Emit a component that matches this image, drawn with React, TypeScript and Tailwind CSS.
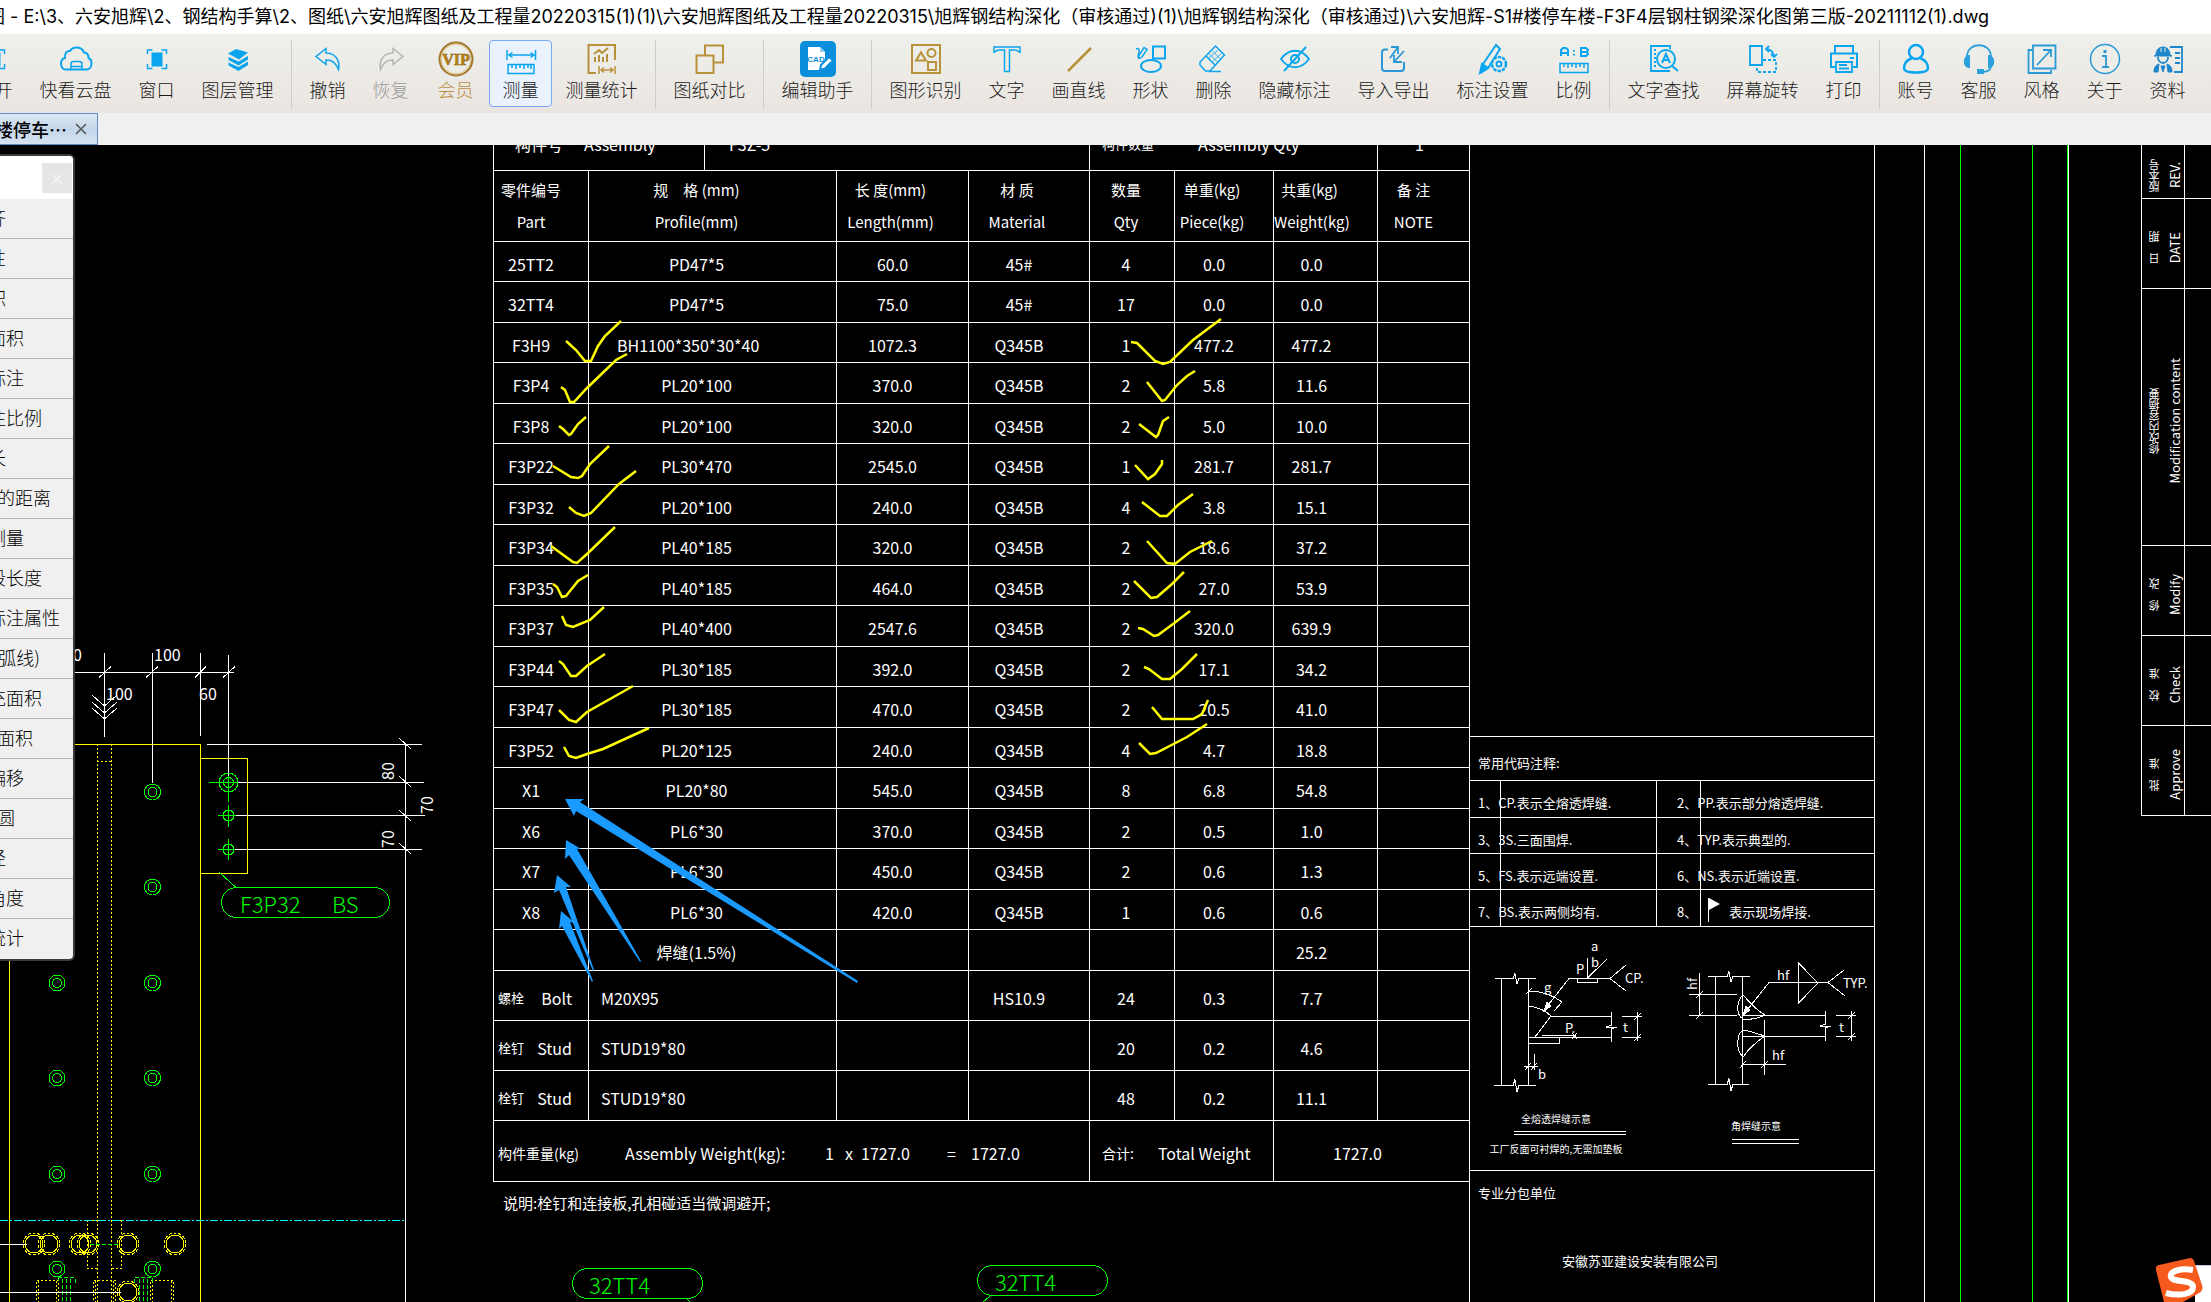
import React from 'react';
import clsx from 'clsx';

const BLUE = '#0aa5ee';
const GOLD = '#b8923a';

function Icon({ children, stroke = BLUE }: { children: React.ReactNode; stroke?: string }) {
  return (
    <svg className="h-9 w-9 shrink-0" viewBox="0 0 36 36" fill="none" stroke={stroke} strokeWidth={2} aria-hidden="true">
      {children}
    </svg>
  );
}

const icons: Record<string, React.ReactNode> = {
  cloud: (
    <Icon>
      <path d="M8 28.5C4.500 28.500 3 25.500 3 22.500c0-3 2-5 4-5.500C6.500 12 9 9.500 12 10c1.500-2.500 4-3.500 6.500-3.500 4 0 6.500 2 7.500 5 3.500 0 4.500 3 4.500 5.500 2 .8 3 3 3 5.500 0 3.500-2 6-5 6z" />
      <path d="M13 28v-5c0-1.500 1-2.500 2.500-2.500h6c1.500 0 2.500 1 2.500 2.500v5M13 25.500h11" strokeWidth={1.500} />
    </Icon>
  ),
  window: (
    <Icon>
      <rect x="13.500" y="12.500" width="9" height="12" fill={BLUE} />
      <path d="M8.500 13V9h5M22.500 9h5v4M27.500 23v4.500h-5M13.500 27.500h-5V23" strokeWidth={1.500} />
    </Icon>
  ),
  layers: (
    <Icon>
      <g fill={BLUE} stroke="none">
        <path d="M8 12.500l8-4.500 12 3.500-9 7z" />
        <path d="M8.500 16l10 4.500L28 15v3.500L18.500 24.500 8.500 19z" />
        <path d="M8.500 21.500l10 4.500L28 20.500V24l-9.500 6-10-5.500z" />
      </g>
    </Icon>
  ),
  undo: (
    <Icon>
      <path d="M16 7.500L6 15.500l10 8v-4.500c7 0 9.500 3 12.500 9.500 2-10-4-16.500-12.500-16.500z" strokeWidth={1.500} />
    </Icon>
  ),
  redo: (
    <Icon stroke="#b4b4b4">
      <path d="M20 7.500l10 8-10 8v-4.500c-7 0-9.500 3-12.500 9.500-2-10 4-16.500 12.500-16.500z" strokeWidth={1.500} />
    </Icon>
  ),
  vip: (
    <Icon stroke="#a1762b">
      <circle cx="18" cy="18" r="16.500" />
      <circle cx="18" cy="18" r="15" stroke="#d8b96c" strokeWidth={1} />
      <text x="18" y="24" textAnchor="middle" fill="#b8870f" stroke="#8d6113" strokeWidth={0.500} className="font-['Liberation_Serif',serif] text-base font-bold">
        VIP
      </text>
    </Icon>
  ),
  measure: (
    <Icon>
      <path d="M4 9v10M32.500 9v10M6 14h25M9.500 11.500L6 14l3.500 2.500M27.500 11.500L31 14l-3.500 2.500" strokeWidth={1.500} />
      <path d="M5 23.500h26v9H5zM9 24v3M13 24v4M17 24v3M21 24v4M25 24v3M28 24v4" strokeWidth={1.500} />
    </Icon>
  ),
  stats: (
    <Icon stroke={GOLD}>
      <path d="M12 32H4.500V4H31v15" />
      <path d="M10 13l5-4 3 3 6-5M11 16v5M15 14v7M19 16v5M23 13v8" />
      <path d="M15 25v8M31 25v8M17 29h12M20 26.500L17 29l3 2.500M26 26.500l3 2.500-3 2.500" strokeWidth={1.500} />
    </Icon>
  ),
  compare: (
    <Icon stroke={GOLD}>
      <path d="M4.500 14.500h17V32h-17zM13 14V4.500h18v17h-9" />
    </Icon>
  ),
  cad: (
    <Icon stroke="none">
      <rect width="36" height="36" rx="5" fill="#0b8fdc" />
      <path d="M8 6h12l5 5v18H8z" fill="#fff" />
      <path d="M20 6v5h5z" fill="#8fd0f5" />
      <text x="16" y="21" textAnchor="middle" fill="#0b8fdc" className="font-['Liberation_Sans',sans-serif] text-[8px] font-bold">
        CAD
      </text>
      <path d="M20 29l1-5 8-8 4 3.500-8 8z" fill="#fff" stroke="#0b8fdc" />
    </Icon>
  ),
  recognise: (
    <Icon stroke={GOLD}>
      <path d="M4 4h28v28H4z" />
      <circle cx="23.500" cy="12" r="4" />
      <path d="M8 19.500l5-8 5 8zM20 21h8v8h-8z" />
    </Icon>
  ),
  text: (
    <Icon>
      <path d="M5 6h26v6c-1-2-3-3-6-3h-4.500v21.500h-5V9H11c-3 0-5 1-6 3z" strokeWidth={1.500} />
    </Icon>
  ),
  line: (
    <Icon stroke={GOLD}>
      <path d="M7 30L30 7" strokeWidth={2.500} />
    </Icon>
  ),
  shapes: (
    <Icon>
      <path d="M20 5.500h12v12H20z" />
      <ellipse cx="18" cy="25" rx="10" ry="6" />
      <path d="M3 8c3-1.500 4 1 2.500 5s1 5 3.500 3L14 8.500l-3-2-5 8-.5 3.500" strokeWidth={1.500} />
    </Icon>
  ),
  erase: (
    <Icon>
      <path d="M19.500 5l9 9-14.500 16H9.500L4 24v-3zM10 15l9.500 9.500M13 30.500h12" strokeWidth={1.500} />
      <path d="M13 12.500l9 9M16 9.500l9 9M13 17l9-8M16.500 20.500l9-8" strokeWidth={0.800} />
    </Icon>
  ),
  hide: (
    <Icon>
      <path d="M4 18c8-11 20-11 28 0-8 11-20 11-28 0z" strokeWidth={1.800} />
      <circle cx="18" cy="18" r="4" />
      <path d="M7 30L29 6" />
    </Icon>
  ),
  exchange: (
    <Icon stroke="#2a98d4">
      <path d="M12 8.500H9c-2 0-3 1-3 3V27c0 2 1 3 3 3h16c2 0 3-1 3-3v-6" />
      <path d="M15 6h7v7M22 6l-8 11M28 10L18 21M18 14v7h8" strokeWidth={1.800} />
    </Icon>
  ),
  settings: (
    <Icon>
      <path d="M21 4l4 4-12 19-6 4 1-8z" />
      <path d="M5 32l2-9 6 4z" fill={BLUE} />
      <circle cx="24" cy="23" r="7" fill="#edebe8" strokeDasharray="3.500 1" strokeWidth={2.500} />
      <circle cx="24" cy="23" r="2.500" />
    </Icon>
  ),
  scale: (
    <Icon>
      <path d="M5 15V9l2-2h3l2 2v6M5 12h7M25 7h5l2 2-1 2 1 2-2 2h-5zM25 11h6M18 9v1.500M18 13v1.500" />
      <path d="M4 22.500h28v9H4zM8 23v3M12 23v4M16 23v3M20 23v4M24 23v3M28 23v4" strokeWidth={1.500} />
    </Icon>
  ),
  find: (
    <Icon>
      <path d="M24 8V5H5v25h19M8 9h2M8 13h2M8 17h2M8 21h2M8 25h2" strokeWidth={1.800} />
      <circle cx="20" cy="18" r="9" />
      <path d="M26 25l6 5M16 22l4-9 4 9M18 19h4" />
    </Icon>
  ),
  rotate: (
    <Icon>
      <path d="M5 5h12v19H5z" strokeWidth={1.800} />
      <path d="M18 19h13v12H12v-6" strokeDasharray="3 2" strokeWidth={1.800} />
      <path d="M21 8c4 0 7 3 8 7M24 5l-3 3 3 3M26 13l3 3 3-3" strokeWidth={1.800} />
    </Icon>
  ),
  print: (
    <Icon>
      <path d="M9 12V5h18v7M9 26H5V12.500h26V26h-4" />
      <path d="M10 21h16v10H10zM13 24h8M13 27.500h10M24 17h4" strokeWidth={1.800} />
    </Icon>
  ),
  account: (
    <Icon>
      <circle cx="18" cy="11" r="7" strokeWidth={2.500} />
      <path d="M14 17c-5 2-8 6-8 10 0 3 3 4.500 12 4.500S30 30 30 27c0-4-3-8-8-10" strokeWidth={2.500} />
    </Icon>
  ),
  service: (
    <Icon stroke="#2ba0dc">
      <path d="M6 17C5 0 31 0 30 17M30 26c-1 4-5 5-9 5" strokeWidth={1.800} />
      <path d="M8 15c-5 0-6 10 0 11zM28 15c5 0 6 10 0 11zM17 29h5v3h-5z" fill="#2ba0dc" />
    </Icon>
  ),
  style: (
    <Icon stroke="#2a9ad6">
      <path d="M9 4.500h22.500v23H9zM8 9H4.500v23H27v-3M13 24L27 9M19 9h8v7" strokeWidth={1.800} />
    </Icon>
  ),
  about: (
    <Icon stroke="#2a9ad6">
      <circle cx="18" cy="18" r="14.500" strokeWidth={1.500} />
      <path d="M15 15h4v11M15 26h7" strokeWidth={1.800} />
      <path d="M18 9v3" strokeWidth={3} />
    </Icon>
  ),
  docs: (
    <Icon stroke="#1d86cc">
      <path d="M20 6h12v25H24M25 12h5M25 17h5M25 22h5" strokeWidth={1.800} />
      <path d="M6 14c0-5 3-8 7-8s7 3 7 8l2 1H4z" fill="#1d86cc" strokeWidth={1} />
      <path d="M11 7v4M15 7v4" stroke="#edebe8" strokeWidth={1} />
      <path d="M8 16c0 8 10 8 10 0" strokeWidth={1.800} />
      <path d="M4 31c0-5 2-7 5-8l-1 8zM22 31c0-5-2-7-5-8l1 8zM13 31l-2-6h4z" fill="#1d86cc" strokeWidth={1} />
    </Icon>
  ),
};

type Tool = { label: string; icon: string; size: string; look?: 'gold' | 'muted' | 'active' };

const toolGroups: Tool[][] = [
  [
    { label: '打开', icon: 'window', size: 'w-[63px]' },
    { label: '快看云盘', icon: 'cloud', size: 'w-[99px]' },
    { label: '窗口', icon: 'window', size: 'w-[63px]' },
    { label: '图层管理', icon: 'layers', size: 'w-[99px]' },
  ],
  [
    { label: '撤销', icon: 'undo', size: 'w-[63px]' },
    { label: '恢复', icon: 'redo', size: 'w-[63px]', look: 'muted' },
    { label: '会员', icon: 'vip', size: 'w-[67px]', look: 'gold' },
    { label: '测量', icon: 'measure', size: 'w-[63px]', look: 'active' },
    { label: '测量统计', icon: 'stats', size: 'w-[99px]' },
  ],
  [{ label: '图纸对比', icon: 'compare', size: 'w-[99px]' }],
  [{ label: '编辑助手', icon: 'cad', size: 'w-[99px]' }],
  [
    { label: '图形识别', icon: 'recognise', size: 'w-[99px]' },
    { label: '文字', icon: 'text', size: 'w-[63px]' },
    { label: '画直线', icon: 'line', size: 'w-[81px]' },
    { label: '形状', icon: 'shapes', size: 'w-[63px]' },
    { label: '删除', icon: 'erase', size: 'w-[63px]' },
    { label: '隐藏标注', icon: 'hide', size: 'w-[99px]' },
    { label: '导入导出', icon: 'exchange', size: 'w-[99px]' },
    { label: '标注设置', icon: 'settings', size: 'w-[99px]' },
    { label: '比例', icon: 'scale', size: 'w-[63px]' },
  ],
  [
    { label: '文字查找', icon: 'find', size: 'w-[99px]' },
    { label: '屏幕旋转', icon: 'rotate', size: 'w-[99px]' },
    { label: '打印', icon: 'print', size: 'w-[63px]' },
  ],
  [
    { label: '账号', icon: 'account', size: 'w-[63px]' },
    { label: '客服', icon: 'service', size: 'w-[63px]' },
    { label: '风格', icon: 'style', size: 'w-[63px]' },
    { label: '关于', icon: 'about', size: 'w-[63px]' },
    { label: '资料', icon: 'docs', size: 'w-[63px]' },
  ],
];

// The palette hangs off the left edge of the window, so labels are cut there.
const measureItems = [
  { label: '对齐', end: 'w-[6px]' },
  { label: '线性', end: 'w-[6px]' },
  { label: '面积', end: 'w-[6px]' },
  { label: '矩形面积', end: 'w-[24px]' },
  { label: '坐标标注', end: 'w-[24px]' },
  { label: '标注比例', end: 'w-[42px]' },
  { label: '弧长', end: 'w-[6px]' },
  { label: '点到线的距离', end: 'w-[51px]' },
  { label: '连续测量', end: 'w-[24px]' },
  { label: '分段长度', end: 'w-[42px]' },
  { label: '修改标注属性', end: 'w-[60px]' },
  { label: '面积(弧线)', end: 'w-[40px]' },
  { label: '填充面积', end: 'w-[42px]' },
  { label: '侧面积', end: 'w-[33px]' },
  { label: '测量偏移', end: 'w-[24px]' },
  { label: '画圆', end: 'w-[15px]' },
  { label: '半径', end: 'w-[6px]' },
  { label: '测量角度', end: 'w-[24px]' },
  { label: '测量统计', end: 'w-[24px]' },
];

const parts = [
  ['25TT2', 'PD47*5', '60.0', '45#', '4', '0.0', '0.0'],
  ['32TT4', 'PD47*5', '75.0', '45#', '17', '0.0', '0.0'],
  ['F3H9', 'BH1100*350*30*40', '1072.3', 'Q345B', '1', '477.2', '477.2'],
  ['F3P4', 'PL20*100', '370.0', 'Q345B', '2', '5.8', '11.6'],
  ['F3P8', 'PL20*100', '320.0', 'Q345B', '2', '5.0', '10.0'],
  ['F3P22', 'PL30*470', '2545.0', 'Q345B', '1', '281.7', '281.7'],
  ['F3P32', 'PL20*100', '240.0', 'Q345B', '4', '3.8', '15.1'],
  ['F3P34', 'PL40*185', '320.0', 'Q345B', '2', '18.6', '37.2'],
  ['F3P35', 'PL40*185', '464.0', 'Q345B', '2', '27.0', '53.9'],
  ['F3P37', 'PL40*400', '2547.6', 'Q345B', '2', '320.0', '639.9'],
  ['F3P44', 'PL30*185', '392.0', 'Q345B', '2', '17.1', '34.2'],
  ['F3P47', 'PL30*185', '470.0', 'Q345B', '2', '20.5', '41.0'],
  ['F3P52', 'PL20*125', '240.0', 'Q345B', '4', '4.7', '18.8'],
  ['X1', 'PL20*80', '545.0', 'Q345B', '8', '6.8', '54.8'],
  ['X6', 'PL6*30', '370.0', 'Q345B', '2', '0.5', '1.0'],
  ['X7', 'PL6*30', '450.0', 'Q345B', '2', '0.6', '1.3'],
  ['X8', 'PL6*30', '420.0', 'Q345B', '1', '0.6', '0.6'],
  ['', '焊缝(1.5%)', '', '', '', '', '25.2'],
];

const fasteners = [
  ['螺栓', 'Bolt', 'M20X95', '', 'HS10.9', '24', '0.3', '7.7'],
  ['栓钉', 'Stud', 'STUD19*80', '', '', '20', '0.2', '4.6'],
  ['栓钉', 'Stud', 'STUD19*80', '', '', '48', '0.2', '11.1'],
];

const partHeads = [
  ['零件编号', 'Part'],
  ['规　格 (mm)', 'Profile(mm)'],
  ['长 度(mm)', 'Length(mm)'],
  ['材 质', 'Material'],
  ['数量', 'Qty'],
  ['单重(kg)', 'Piece(kg)'],
  ['共重(kg)', 'Weight(kg)'],
  ['备 注', 'NOTE'],
];

// right padding per column: the drawing's texts sit left of the cell centre
const colPad = ['pr-5', 'pr-8', 'pr-5', 'pr-5', 'pr-3', 'pr-5', 'pr-7', 'pr-4'];
const headPad = ['pr-5', 'pr-8', 'pr-6', 'pr-6', 'pr-3', 'pr-6', 'pr-8', 'pr-5'];

function PartsTable() {
  return (
    <table className="absolute left-[493px] -top-4 w-[977px] table-fixed border-collapse text-center text-base leading-5 text-white [&_td]:border [&_td]:border-white [&_th]:border [&_th]:border-white [&_th]:font-normal">
      <colgroup>
        <col className="w-[95px]" />
        <col className="w-[248px]" />
        <col className="w-[132px]" />
        <col className="w-[121px]" />
        <col className="w-[85px]" />
        <col className="w-[99px]" />
        <col className="w-[104px]" />
        <col className="w-[92px]" />
      </colgroup>
      <thead>
        <tr className="h-10">
          <td colSpan={4} className="p-0">
            <div className="flex h-10">
              <div className="flex w-[211px] border-r border-white pt-1">
                <span className="w-[90px]">构件号</span>
                <span>Assembly</span>
              </div>
              <span className="pt-1 pl-6">F3Z-5</span>
            </div>
          </td>
          <td colSpan={3} className="p-0 align-top">
            <div className="flex gap-11 pt-1 pl-3">
              <span className="text-[13px]">构件数量</span>
              <span>Assembly Qty</span>
            </div>
          </td>
          <td className="p-0 pt-1 pr-2 align-top">1</td>
        </tr>
        <tr className="h-[71px]">
          {partHeads.map(([zh, en], i) => (
            <th key={en} scope="col" className={clsx('p-0', headPad[i])}>
              <div className="flex flex-col gap-3 whitespace-nowrap">
                <span className="text-[15px] leading-5">{zh}</span>
                <span className="text-[15px] leading-5">{en}</span>
              </div>
            </th>
          ))}
        </tr>
      </thead>
      <tbody>
        {parts.map((row, r) => (
          <tr key={r} className={r % 2 ? 'h-[41px]' : 'h-[40px]'}>
            {row.map((value, c) => (
              <td key={c} className={clsx('p-0 pt-1', value.length > 12 ? 'pl-7 text-left' : colPad[c])}>
                {value}
              </td>
            ))}
            <td />
          </tr>
        ))}
        {fasteners.map(([zh, en, ...rest], r) => (
          <tr key={r} className="h-[50px]">
            <td className="p-0 pt-1">
              <div className="flex justify-between pr-4 pl-1">
                <span className="text-[13px] leading-5">{zh}</span>
                <span>{en}</span>
              </div>
            </td>
            {rest.map((value, c) => (
              <td key={c} className={clsx('p-0 pt-1', c === 0 ? 'pl-3 text-left' : colPad[c + 1])}>
                {value}
              </td>
            ))}
            <td />
          </tr>
        ))}
        <tr className="h-[61px]">
          <td colSpan={4} className="p-0 pt-1">
            <div className="flex pl-1">
              <span className="w-[127px] text-left text-sm leading-5">构件重量(kg)</span>
              <span className="w-[200px] text-left">Assembly Weight(kg):</span>
              <span className="w-5 text-left">1</span>
              <span className="w-4 text-left">x</span>
              <span className="w-[86px] text-left">1727.0</span>
              <span className="w-6 text-left">=</span>
              <span>1727.0</span>
            </div>
          </td>
          <td colSpan={2} className="p-0 pt-1">
            <div className="flex gap-6 pl-3">
              <span className="text-sm leading-5">合计:</span>
              <span>Total Weight</span>
            </div>
          </td>
          <td colSpan={2} className="p-0 pt-1 pr-7">
            1727.0
          </td>
        </tr>
      </tbody>
    </table>
  );
}

function CodeNotes() {
  return (
    <section className="absolute top-[591px] left-[1469px] w-[406px] border border-b-0 border-white text-[13px] leading-5 text-white">
      <h2 className="h-[44px] border-b border-white pt-4 pl-2">常用代码注释:</h2>
      <div className="grid grid-cols-[187px_1fr]">
        <p className="h-[37px] border-r border-b border-white pt-3 pl-2">1、CP.表示全熔透焊缝.</p>
        <p className="h-[37px] border-b border-white pt-3 pl-5">2、PP.表示部分熔透焊缝.</p>
        <p className="h-9 border-r border-b border-white pt-3 pl-2">3、3S.三面围焊.</p>
        <p className="h-9 border-b border-white pt-3 pl-5">4、TYP.表示典型的.</p>
        <p className="h-9 border-r border-b border-white pt-3 pl-2">5、FS.表示远端设置.</p>
        <p className="h-9 border-b border-white pt-3 pl-5">6、NS.表示近端设置.</p>
        <p className="h-[37px] border-r border-b border-white pt-3 pl-2">7、BS.表示两侧均有.</p>
        <p className="flex h-[37px] gap-2 border-b border-white pt-3 pl-5">
          8、
          <svg className="-mt-1 h-6 w-4" viewBox="0 0 16 24" fill="#fff" aria-hidden="true">
            <path d="M3 0h1l11 6-11 6v12H3z" />
          </svg>
          <span>表示现场焊接.</span>
        </p>
      </div>
      <div className="h-[244px] border-b border-white" />
      <p className="pt-3 pl-2">专业分包单位</p>
      <p className="pt-12 pr-16 text-center">安徽苏亚建设安装有限公司</p>
    </section>
  );
}

const revisions = [
  { zh: '版本号', en: 'REV.', h: 'h-[54px]' },
  { zh: '日　期', en: 'DATE', h: 'h-[90px]' },
  { zh: '修改内容摘要', en: 'Modification content', h: 'h-[257px]' },
  { zh: '修　改', en: 'Modify', h: 'h-[90px]' },
  { zh: '校　准', en: 'Check', h: 'h-[90px]' },
  { zh: '批　准', en: 'Approve', h: 'h-[90px]' },
];

function RevisionStrip() {
  return (
    <div className="absolute top-0 right-0 flex w-[70px] flex-col border-l border-white text-white">
      {revisions.map((rev) => (
        <div key={rev.en} className={clsx('flex border-b border-white', rev.h)}>
          <div className="flex w-[43px] items-center justify-between border-r border-white pt-3 pb-1 pr-px pl-1">
            <span className="rotate-180 text-[11px] leading-4 whitespace-nowrap [writing-mode:vertical-rl]">{rev.zh}</span>
            <span className="rotate-180 text-[13px] leading-4 whitespace-nowrap [writing-mode:vertical-rl]">{rev.en}</span>
          </div>
        </div>
      ))}
    </div>
  );
}

const ticks = [
  '566,341 576,350 585,361 591,361 598,346 605,336 621,321',
  '561,387 565,390 570,402 574,402 587,388 616,360 627,354',
  '559,426 563,429 569,435 571,434 578,424 586,417',
  '553,466 571,477 578,478 582,476 590,464 609,446',
  '569,507 576,513 584,516 591,513 619,484 636,471',
  '551,546 573,562 577,563 587,554 615,527',
  '553,584 557,587 562,597 566,596 578,581 588,575',
  '562,616 566,625 573,627 590,620 604,607',
  '559,661 563,664 571,676 576,676 587,666 605,654',
  '559,710 569,720 576,722 587,712 626,690 633,686',
  '564,747 569,756 576,758 587,754 603,749 649,728',
  '1131,342 1137,343 1155,361 1163,364 1170,362 1193,340 1221,319',
  '1147,382 1162,401 1165,400 1177,385 1187,376 1195,371',
  '1139,424 1156,437 1158,435 1163,421 1169,417',
  '1135,465 1148,479 1155,474 1162,464 1162,460',
  '1142,502 1160,516 1167,516 1178,505 1193,494',
  '1147,541 1167,563 1175,564 1190,552 1212,541',
  '1134,581 1151,598 1157,597 1172,584 1184,572',
  '1138,628 1143,629 1154,636 1158,635 1173,624 1190,611',
  '1144,667 1149,669 1162,679 1170,679 1182,669 1197,654',
  '1152,707 1162,719 1193,719 1202,714 1208,700',
  '1139,743 1150,754 1156,753 1187,737 1207,724',
];

const arrows = [
  '565,799 584,799 580,802 858,981 857,983 576,811 574,816',
  '566,840 581,849 577,849 641,961 640,962 569,855 565,859',
  '557,875 571,887 566,887 594,970 593,971 559,890 554,893',
  '561,911 575,923 570,922 593,981 592,982 562,926 559,929',
];

const bolts = [
  [152.5, 792], [152.5, 887], [152.5, 983], [152.5, 1078], [152.5, 1174], [152.5, 1269],
  [57, 983], [57, 1078], [57, 1174], [57, 1269],
];

const shearStuds = [
  [34, 1244], [49, 1244], [80, 1244], [88, 1244], [128, 1244], [175, 1244], [128, 1292],
];

function Markup() {
  return (
    <svg className="pointer-events-none absolute inset-0 h-full w-full" fill="none" aria-hidden="true">
      <g transform="translate(0 -145)">
        <g stroke="#ff0" strokeWidth={2.5}>
          {ticks.map((points) => (
            <polyline key={points} points={points} />
          ))}
        </g>
        <g fill="#1a9aff">
          {arrows.map((points) => (
            <polygon key={points} points={points} />
          ))}
        </g>
      </g>
    </svg>
  );
}

function ColumnDrawing() {
  return (
    <g>
      {/* column and plate outlines */}
      <g stroke="#ff0">
        <path d="M0 744.500H200.500V1400M9.500 744V1400M200.500 758.500H247.500V873.500H200.500" />
        <path d="M97.500 744V1400M111.500 744V1400M97 761.500H112M87.500 1220.500H97M87.500 1220V1268.500H97M121.500 1220.500H111M121.500 1220V1268.500H111M36.500 1400V1280.500H58.500V1400M38.500 1281V1400M56.500 1281V1400M93.500 1400V1280.500H115.500V1400M95.500 1281V1400M113.500 1281V1400M150.500 1400V1280.500H173.500V1400M152.500 1281V1400M171.500 1281V1400" strokeDasharray="2 2" />
        {shearStuds.map(([x, y]) => (
          <g key={`${x}-${y}`}>
            <circle cx={x} cy={y} r={11} strokeDasharray="3 2" />
            <circle cx={x} cy={y} r={9} />
          </g>
        ))}
      </g>
      <path d="M0 1220.500H405" stroke="#0ff" strokeDasharray="8 2 2 2" />
      <g stroke="#0f0">
        {bolts.map(([x, y]) => (
          <g key={`${x}-${y}`}>
            <circle cx={x} cy={y} r={8} />
            <circle cx={x} cy={y} r={4.5} />
          </g>
        ))}
        <circle cx={228.5} cy={782.5} r={9.5} />
        <circle cx={228.5} cy={782.5} r={5} />
        <circle cx={228.5} cy={815.5} r={5.5} />
        <circle cx={228.5} cy={849.5} r={5.5} />
        <path d="M209 782.500H238M228.500 775V802M218 815.500H237M228.500 805V827M218 849.500H237M228.500 839V860" />
        <path d="M219 872L236 887.500" />
        <rect x="221.500" y="887.500" width="168" height="30" rx="15" />
        <path d="M90 1244.500H118M58 1277.500H75V1283M58 1277V1283M62.500 1279V1400M66.500 1279V1400M70.500 1279V1400M134 1283V1277.500H152V1283M139.500 1279V1400M143.500 1279V1400M147.500 1279V1400" strokeDasharray="4 2" />
      </g>
      <g stroke="#fff">
        <path d="M0 672.500H234M104.500 653V737M152.500 653V783M200.500 653V736M228.500 655V776" />
        <path d="M99 677.500l12-11M146 677.500l12-11M195 677.500l11-11M223 677.500l12-11" />
        <path d="M92 695l12.500 11 12.500-11M92 702l12.500 11 12.500-11M92 708l12.500 11 12.500-11" />
        <path d="M207 744.500H422M238 782.500H424M236 815.500H425M235 849.500H422M405.500 744V1400" />
        <path d="M399 738l12 11M399 776l12 11M399 810l12 11M399 843l12 11" />
        <path d="M0 1244.500H27M0 1292.500H121" />
      </g>
    </g>
  );
}

function WeldDetails() {
  return (
    <g stroke="#fff">
      {/* full penetration weld */}
      <path d="M1495 978.500H1513l2-5 2 10 2-5H1536M1494 1085.500H1513l2-6 2 12 2-6H1536M1501.500 978V1085M1528.500 978V1085" />
      <path d="M1528 991c14 0 26 5 34 11M1526 994l6-6M1554 1011l8-9M1528 1006c10 1 18 5 23 10L1535 1037" />
      <path d="M1551 1016.500H1611.500M1528 1037.500H1611.500M1611.500 1012V1025l-5 2h10l-5 2V1042M1528 1043.500H1559.500V1037M1542 1035.500H1576M1572 1033l5 6M1577 1033l-5 6" />
      <path d="M1622 1016.500H1642M1622 1037.500H1641M1637.500 1012V1041M1634 1020l7-7M1634 1041l7-7" />
      <path d="M1545 1009L1569 978.500H1610M1587.500 958V978L1607 959M1577.500 978V982.500H1597.500V978M1626 965L1610 978.500 1626 991" />
      <path d="M1544 1011l3-9 4 4z" fill="#fff" />
      <path d="M1524 1066.500H1538M1534.500 1054V1070M1525 1070l6-7M1531 1070l6-7" />
      <path d="M1514 1131.500H1626M1514 1134.500H1626" />
      {/* fillet weld */}
      <path d="M1708 976.500H1727l2-5 2 10 2-5H1750M1708 1084.500H1727l2-6 2 12 2-6H1749M1715.500 976V1084M1742.500 976V1084" />
      <path d="M1689 994.500H1737M1689 1015.500H1737M1699.500 973V1016M1696 998l7-7M1696 1019l7-7" />
      <path d="M1743 995c7 8 13 15 22 20-8 4-15 5-22 4-8-5-6-19 0-24zM1743 1030c8 1 14 4 22 6-9 6-15 11-22 21-8-8-6-23 0-27z" />
      <path d="M1742 1015.500H1825.500M1742 1036.500H1825.500M1825.500 1011V1024l-5 2h10l-5 2V1041" />
      <path d="M1836 1015.500H1856M1836 1036.500H1856M1851.500 1011V1041M1848 1019l7-7M1848 1040l7-7" />
      <path d="M1744 1014L1769 982.500H1829M1798.500 963V1003L1818 983zM1844 970L1828 982.500 1845 996" />
      <path d="M1743 1015l3-9 4 4z" fill="#fff" />
      <path d="M1742 1064.500H1786M1764.500 1020V1075M1740 1068l6-7M1761 1068l7-7" />
      <path d="M1732 1139.500H1799M1732 1143.500H1799" />
      <g fill="#fff" stroke="none" className="text-[13px]">
        <text x="1591" y="951">a</text>
        <text x="1591" y="967">b</text>
        <text x="1576" y="974">P</text>
        <text x="1625" y="983">CP.</text>
        <text x="1544" y="992">g</text>
        <text x="1565" y="1033">P.</text>
        <text x="1623" y="1032">t</text>
        <text x="1538" y="1079">b</text>
        <text x="1777" y="980">hf</text>
        <text x="1843" y="988">TYP.</text>
        <text x="1839" y="1032">t</text>
        <text x="1772" y="1060">hf</text>
        <text x="1697" y="990" transform="rotate(-90 1697 990)">hf</text>
      </g>
      <g fill="#fff" stroke="none" textAnchor="middle" className="text-[10px]">
        <text x="1556" y="1123">全熔透焊缝示意</text>
        <text x="1556" y="1153">工厂反面可衬焊的,无需加垫板</text>
        <text x="1756" y="1130">角焊缝示意</text>
      </g>
    </g>
  );
}

function Drawing() {
  return (
    <svg className="absolute inset-0 h-full w-full" fill="none" aria-hidden="true">
      <g transform="translate(0 -145)" shapeRendering="crispEdges">
        <ColumnDrawing />
        <WeldDetails />
        <g stroke="#fff">
          <path d="M1469.500 145V1400M1874.500 145V1400M1924.500 145V1400M2068.500 145V1400M1500.500 780V926M1700.500 780V926" />
        </g>
        <g stroke="#0f0">
          <path d="M1960.500 145V1400M2032.500 145V1400M2067.500 145V1400" />
          <rect x="572.500" y="1268.500" width="130" height="30" rx="15" />
          <rect x="977.500" y="1265.500" width="130" height="30" rx="15" />
          <path d="M687 1299l4 4M990 1296l-8 7" />
        </g>
        <g fill="#fff" className="text-base">
          <text x="73" y="661">0</text>
          <text x="154" y="661">100</text>
          <text x="106" y="700">100</text>
          <text x="199" y="700">60</text>
          <text x="394" y="780" transform="rotate(-90 394 780)">80</text>
          <text x="433" y="814" transform="rotate(-90 433 814)">70</text>
          <text x="394" y="848" transform="rotate(-90 394 848)">70</text>
        </g>
        <g fill="#0f0" className="text-[22px] font-light">
          <text x="240" y="913">F3P32</text>
          <text x="332" y="913">BS</text>
          <text x="589" y="1294">32TT4</text>
          <text x="995" y="1291">32TT4</text>
        </g>
      </g>
    </svg>
  );
}

function Toolbar() {
  return (
    <nav className="flex h-[79px] shrink-0 items-start overflow-hidden bg-gradient-to-b from-[#eef0eb] to-[#ebe5e1] pt-1.5">
      <div className="-ml-[37px] flex">
        {toolGroups.map((group, i) => (
          <div key={i} className="flex shrink-0">
            {i > 0 && <div className="mx-1 h-[69px] w-px bg-[#cfcdca]" />}
            {group.map((tool) => (
              <button
                key={tool.label}
                type="button"
                className={clsx(
                  'flex h-[67px] shrink-0 flex-col items-center rounded-sm border text-lg leading-6 font-light',
                  tool.size,
                  tool.look === 'active' ? 'border-[#7ba6f5] bg-[#eaf2fe]' : 'border-transparent',
                  tool.look === 'gold' ? 'text-[#b98e3c]' : tool.look === 'muted' ? 'text-[#9a9a9a]' : 'text-[#1a1a1a]',
                )}
              >
                {icons[tool.icon]}
                <span className="whitespace-nowrap">{tool.label}</span>
              </button>
            ))}
          </div>
        ))}
      </div>
    </nav>
  );
}

function MeasurePalette() {
  return (
    <aside className="absolute top-[9px] left-0 w-[75px] overflow-hidden rounded-r-md border-2 border-l-0 border-[#3a3a3a] bg-[#f0f0f0]">
      <div className="flex h-[43px] items-center justify-end bg-white pr-px">
        <button type="button" aria-label="关闭" className="flex h-[30px] w-[30px] items-center justify-center bg-[#e5e5e5] text-base text-[#f8f8f8]">
          ×
        </button>
      </div>
      <ul className="divide-y divide-[#b4b4b4]">
        {measureItems.map((item) => (
          <li key={item.label} className="h-10">
            <button type="button" className="flex h-full w-full items-center pb-1 text-lg leading-6 font-light text-black">
              <span className={clsx('flex justify-end whitespace-nowrap', item.end)}>{item.label}</span>
            </button>
          </li>
        ))}
      </ul>
    </aside>
  );
}

export default function App() {
  return (
    <div className="flex min-h-screen flex-col overflow-hidden bg-black font-['Noto_Sans_CJK_SC',sans-serif]">
      <header className="flex h-[34px] shrink-0 items-center overflow-hidden bg-white">
        <h1 className="-ml-[13px] font-['Inter','Noto_Sans_CJK_SC',sans-serif] text-lg leading-6 whitespace-nowrap text-black">
          图 - E:\3、六安旭辉\2、钢结构手算\2、图纸\六安旭辉图纸及工程量20220315(1)(1)\六安旭辉图纸及工程量20220315\旭辉钢结构深化（审核通过)(1)\旭辉钢结构深化（审核通过)\六安旭辉-S1#楼停车楼-F3F4层钢柱钢梁深化图第三版-20211112(1).dwg
        </h1>
      </header>
      <Toolbar />
      <div className="flex h-8 shrink-0 bg-[#f0f0f0]">
        <div className="flex w-[98px] items-center justify-end gap-2 border border-l-0 border-[#5f8cc0] bg-gradient-to-b from-[#dfe9f5] via-[#c3d5ea] to-[#d5e3f1] pr-2.5">
          <span className="flex w-[67px] justify-end text-lg leading-6 font-medium whitespace-nowrap">#楼停车⋯</span>
          <button type="button" aria-label="关闭标签" className="shrink-0 text-[#555]">
            <svg className="h-3 w-3" viewBox="0 0 12 12" stroke="currentColor" strokeWidth={1.500} aria-hidden="true">
              <path d="M1 1l10 10M11 1L1 11" />
            </svg>
          </button>
        </div>
      </div>
      <main className="relative flex-1 overflow-hidden bg-black">
        <Drawing />
        <PartsTable />
        <p className="absolute top-[1048px] left-[503px] text-[15px] leading-5 text-white">说明:栓钉和连接板,孔相碰适当微调避开;</p>
        <CodeNotes />
        <RevisionStrip />
        <Markup />
        <MeasurePalette />
        <div className="absolute right-0 bottom-0 h-[37px] w-4 border-t border-[#c8cbe0] bg-white" />
        <svg className="absolute right-2 bottom-0 h-11 w-12" viewBox="0 0 48 44" aria-hidden="true">
          <path d="M1 12Q0 8 4 7L35 0q3 0 4 3l8 24q2 5-3 8L28 44H9z" fill="#f65a1c" />
          <path d="M38 12C26 10 14 13 16 19s22 2 22 10-16 9-27 6" fill="none" stroke="#fff" strokeWidth={6} />
        </svg>
      </main>
    </div>
  );
}
